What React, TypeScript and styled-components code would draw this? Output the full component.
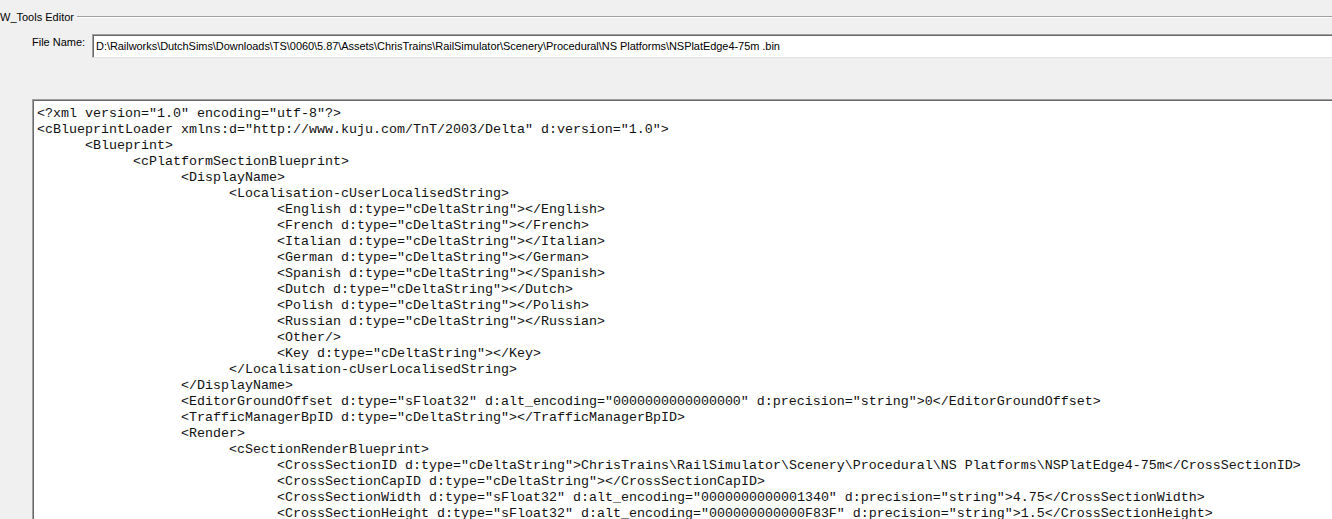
import React from "react";
import styled, { createGlobalStyle } from "styled-components";

const GlobalStyle = createGlobalStyle`
  html, body {
    margin: 0;
    padding: 0;
    background: #f0f0f0;
    overflow: hidden;
  }
  body {
    font-family: "Liberation Sans", Arial, sans-serif;
    font-size: 11px;
    color: #000;
  }
`;

const Window = styled.div`
  width: 1332px;
  height: 519px;
  overflow: hidden;
  background: #f0f0f0;
`;

// group box header: caption followed by the etched line
const GroupHeader = styled.div`
  display: flex;
  align-items: flex-start;
  padding-top: 11px;
  height: 13px;
  line-height: 13px;

  &::after {
    content: "";
    flex: 1;
    height: 1px;
    margin-top: 5px;
    margin-left: 3px;
    background: #a0a0a0;
    box-shadow: 0 1px 0 #ffffff;
  }
`;

const GroupTitle = styled.span`
  white-space: nowrap;
`;

const FileRow = styled.div`
  display: flex;
  align-items: flex-start;
  margin-top: 10px;
  padding-left: 32px;
`;

const Label = styled.label`
  width: 60px;
  flex: none;
  padding-top: 2px;
  line-height: 13px;
  white-space: nowrap;
`;

const TextBox = styled.div`
  flex: 1;
  height: 24px;
  box-sizing: border-box;
  background: #fff;
  border-top: 1px solid #a0a0a0;
  border-left: 1px solid #a0a0a0;
  border-bottom: 1px solid #e3e3e3;
  box-shadow: inset 1px 1px 0 #696969;
  padding: 0 0 0 3px;
  display: flex;
  align-items: center;
  font-size: 11px;
  letter-spacing: -0.05px;
  white-space: nowrap;
  overflow: hidden;
`;

const Editor = styled.div`
  margin: 41px 0 0 32px;
  height: 460px;
  box-sizing: border-box;
  background: #fff;
  border-top: 1px solid #a0a0a0;
  border-left: 1px solid #a0a0a0;
  box-shadow: inset 1px 1px 0 #696969;
  padding: 6px 0 0 4px;
  overflow: hidden;
`;

const Line = styled.div<{ $indent: number }>`
  font-family: "Liberation Mono", "Courier New", monospace;
  font-size: 13.333px;
  line-height: 16px;
  height: 16px;
  white-space: pre;
  color: #111;
  padding-left: ${(p) => p.$indent * 48}px;
`;

const filePath =
  "D:\\Railworks\\DutchSims\\Downloads\\TS\\0060\\5.87\\Assets\\ChrisTrains\\RailSimulator\\Scenery\\Procedural\\NS Platforms\\NSPlatEdge4-75m .bin";

const xml: [number, string][] = [
  [0, '<?xml version="1.0" encoding="utf-8"?>'],
  [0, '<cBlueprintLoader xmlns:d="http://www.kuju.com/TnT/2003/Delta" d:version="1.0">'],
  [1, "<Blueprint>"],
  [2, "<cPlatformSectionBlueprint>"],
  [3, "<DisplayName>"],
  [4, "<Localisation-cUserLocalisedString>"],
  [5, '<English d:type="cDeltaString"></English>'],
  [5, '<French d:type="cDeltaString"></French>'],
  [5, '<Italian d:type="cDeltaString"></Italian>'],
  [5, '<German d:type="cDeltaString"></German>'],
  [5, '<Spanish d:type="cDeltaString"></Spanish>'],
  [5, '<Dutch d:type="cDeltaString"></Dutch>'],
  [5, '<Polish d:type="cDeltaString"></Polish>'],
  [5, '<Russian d:type="cDeltaString"></Russian>'],
  [5, "<Other/>"],
  [5, '<Key d:type="cDeltaString"></Key>'],
  [4, "</Localisation-cUserLocalisedString>"],
  [3, "</DisplayName>"],
  [3, '<EditorGroundOffset d:type="sFloat32" d:alt_encoding="0000000000000000" d:precision="string">0</EditorGroundOffset>'],
  [3, '<TrafficManagerBpID d:type="cDeltaString"></TrafficManagerBpID>'],
  [3, "<Render>"],
  [4, "<cSectionRenderBlueprint>"],
  [5, '<CrossSectionID d:type="cDeltaString">ChrisTrains\\RailSimulator\\Scenery\\Procedural\\NS Platforms\\NSPlatEdge4-75m</CrossSectionID>'],
  [5, '<CrossSectionCapID d:type="cDeltaString"></CrossSectionCapID>'],
  [5, '<CrossSectionWidth d:type="sFloat32" d:alt_encoding="0000000000001340" d:precision="string">4.75</CrossSectionWidth>'],
  [5, '<CrossSectionHeight d:type="sFloat32" d:alt_encoding="000000000000F83F" d:precision="string">1.5</CrossSectionHeight>'],
];

const App = () => {
  return (
    <Window>
      <GlobalStyle />
      <GroupHeader>
        <GroupTitle>W_Tools Editor</GroupTitle>
      </GroupHeader>
      <FileRow>
        <Label>File Name:</Label>
        <TextBox>{filePath}</TextBox>
      </FileRow>
      <Editor>
        {xml.map(([indent, text], i) => (
          <Line key={i} $indent={indent}>
            {text}
          </Line>
        ))}
      </Editor>
    </Window>
  );
};

export default App;
